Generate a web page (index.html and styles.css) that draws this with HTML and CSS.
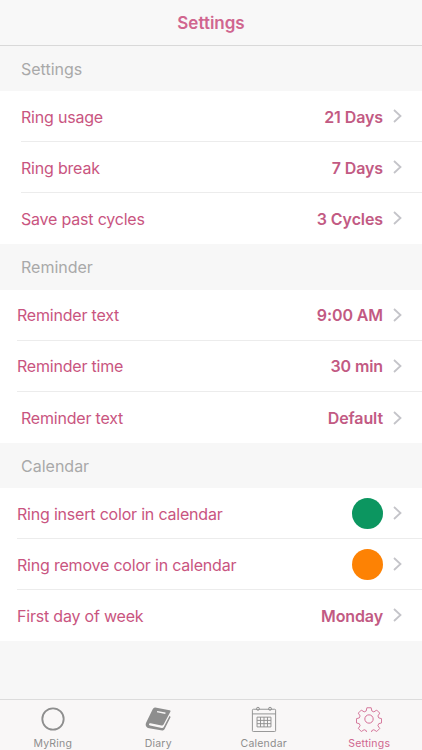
FILE: index.html
```html
<!DOCTYPE html>
<html>
<head>
    <meta charset="utf-8" />
    <meta name="viewport" content="width=device-width, initial-scale=1.0">
    <title>Settings</title>
    <link rel="stylesheet" href="styles.css">
</head>
<body>
    <div class="app">
        <header class="nav-bar">Settings</header>
        <main class="content">
            <div class="section-title">Settings</div>
            <div class="group">
                <div class="row"><span class="row-label">Ring usage</span><span class="row-value">21 Days</span><svg class="chevron" viewBox="0 0 9 14"><path d="M1 1l6.500 6-6.500 6"/></svg></div>
                <div class="row"><span class="row-label">Ring break</span><span class="row-value">7 Days</span><svg class="chevron" viewBox="0 0 9 14"><path d="M1 1l6.500 6-6.500 6"/></svg></div>
                <div class="row"><span class="row-label">Save past cycles</span><span class="row-value">3 Cycles</span><svg class="chevron" viewBox="0 0 9 14"><path d="M1 1l6.500 6-6.500 6"/></svg></div>
            </div>
            <div class="section-title section-tall">Reminder</div>
            <div class="group group-high">
                <div class="row row-tight"><span class="row-label">Reminder text</span><span class="row-value">9:00 AM</span><svg class="chevron" viewBox="0 0 9 14"><path d="M1 1l6.500 6-6.500 6"/></svg></div>
                <div class="row row-tight"><span class="row-label">Reminder time</span><span class="row-value">30 min</span><svg class="chevron" viewBox="0 0 9 14"><path d="M1 1l6.500 6-6.500 6"/></svg></div>
                <div class="row"><span class="row-label">Reminder text</span><span class="row-value">Default</span><svg class="chevron" viewBox="0 0 9 14"><path d="M1 1l6.500 6-6.500 6"/></svg></div>
            </div>
            <div class="section-title">Calendar</div>
            <div class="group">
                <div class="row row-tight"><span class="row-label">Ring insert color in calendar</span><span class="dot dot-green"></span><svg class="chevron" viewBox="0 0 9 14"><path d="M1 1l6.500 6-6.500 6"/></svg></div>
                <div class="row row-tight"><span class="row-label">Ring remove color in calendar</span><span class="dot dot-orange"></span><svg class="chevron" viewBox="0 0 9 14"><path d="M1 1l6.500 6-6.500 6"/></svg></div>
                <div class="row row-tight"><span class="row-label">First day of week</span><span class="row-value">Monday</span><svg class="chevron" viewBox="0 0 9 14"><path d="M1 1l6.500 6-6.500 6"/></svg></div>
            </div>
        </main>
        <nav class="tab-bar">
            <div class="tab">
                <svg class="tab-icon" viewBox="0 0 28 28"><circle class="line" cx="14" cy="14" r="11.500"/></svg>
                <span>MyRing</span>
            </div>
            <div class="tab">
                <svg class="tab-icon" viewBox="0 0 28 28">
                    <path class="fill" d="M11 1.500l15.500 3c1 .2 1.300.9.800 1.700L20 20c-.5.9-1.200 1.200-2.200 1L6 18.500c-2-.4-2.400 2-.6 2.400l12.600 2.700c1 .2 1.700-.1 2.200-1l6.300-12 1.100 1.200-6.600 13.300c-.5 1-1.300 1.400-2.400 1.200L4.500 24C1 23.200 0 20.300 1.300 17.700L8 4c.6-1.200 1.700-2.700 3-2.500z"/>
                    <path class="cut" d="M13 6l9 1.800"/>
                </svg>
                <span>Diary</span>
            </div>
            <div class="tab">
                <svg class="tab-icon" viewBox="0 0 28 28">
                    <rect class="line thin" x="1.500" y="3.500" width="25" height="24" rx="1"/>
                    <path class="line thin" d="M1.500 8.500h25"/>
                    <circle class="line thin" cx="7.500" cy="3" r="1.600"/>
                    <circle class="line thin" cx="20.500" cy="3" r="1.600"/>
                    <path class="line thin" d="M6.500 12h15v10.500h-15zM6.500 15.500h15M6.500 19h15M10.250 12v10.500M14 12v10.500M17.750 12v10.500"/>
                </svg>
                <span>Calendar</span>
            </div>
            <div class="tab tab-active">
                <svg class="tab-icon" viewBox="0 0 28 28">
                    <path class="line thin" d="M11.500 1.500h5l.8 3.800 2.300 1 3.300-2.100 3.500 3.500-2.100 3.300 1 2.300 3.200.8v5l-3.200.8-1 2.300 2.100 3.300-3.500 3.500-3.300-2.100-2.300 1-.8 3.200h-5l-.8-3.200-2.300-1-3.300 2.100-3.500-3.500 2.100-3.300-1-2.300-3.200-.8v-5l3.200-.8 1-2.300-2.100-3.300 3.500-3.500 3.300 2.100 2.300-1z" transform="translate(1 .5) scale(.93)"/>
                    <circle class="line thin" cx="14" cy="14" r="4.500"/>
                </svg>
                <span>Settings</span>
            </div>
        </nav>
    </div>
</body>
</html>
```

FILE: styles.css
```css
html, body {
    margin: 0;
    padding: 0;
}
body {
    font-family: Inter, "Liberation Sans", sans-serif;
    background: #f7f7f7;
}
.app {
    width: 422px;
    height: 750px;
    display: flex;
    flex-direction: column;
    overflow: hidden;
}
.nav-bar {
    height: 45px;
    flex: none;
    display: flex;
    align-items: center;
    justify-content: center;
    background: #f8f8f8;
    border-bottom: 1px solid #d9d9d9;
    color: #d0668f;
    font-size: 17px;
    font-weight: 600;
}
.content {
    flex: 1;
}
.section-title {
    height: 45px;
    padding-left: 21px;
    display: flex;
    align-items: center;
    color: #a9a9a9;
    font-size: 16px;
}
.section-tall {
    height: 46px;
}
.group {
    background: #fff;
}
.row {
    height: 51px;
    box-sizing: border-box;
    margin-left: 21px;
    padding-top: 1px;
    padding-right: 20px;
    display: flex;
    align-items: center;
    border-bottom: 1px solid #ececec;
    color: #c9557f;
    font-size: 16px;
    letter-spacing: -0.2px;
}
.row-tight {
    margin-left: 17px;
}
.group-high .row {
    padding-top: 0;
}
.group-high .chevron {
    margin-top: 0;
}
.group .row:last-child {
    border-bottom: none;
}
.row-label {
    flex: 1;
}
.row-value {
    font-weight: 600;
    color: #c25a83;
    letter-spacing: -0.1px;
}
.chevron {
    width: 9px;
    height: 14px;
    margin-left: 10px;
    margin-top: -2px;
    fill: none;
    stroke: #c4c4c9;
    stroke-width: 1.800;
}
.dot {
    width: 31px;
    height: 31px;
    margin-top: -1px;
    border-radius: 50%;
}
.dot-green {
    background: #0c9660;
}
.dot-orange {
    background: #fd8204;
}
.tab-bar {
    height: 50px;
    flex: none;
    display: flex;
    background: #f9f7f7;
    border-top: 1px solid #dcdcdc;
}
.tab {
    flex: 1;
    display: flex;
    flex-direction: column;
    align-items: center;
    padding-top: 6px;
    color: #8e8e8e;
    font-size: 10.500px;
    letter-spacing: 0.2px;
}
.tab-icon {
    width: 26px;
    height: 26px;
    margin-bottom: 5px;
}
.tab-icon .line {
    fill: none;
    stroke: #8e8e8e;
    stroke-width: 2;
}
.tab-icon .thin {
    stroke-width: 1;
}
.tab-icon .fill {
    fill: #8e8e8e;
}
.tab-icon .cut {
    fill: none;
    stroke: #f9f7f7;
    stroke-width: 1.500;
}
.tab-active {
    color: #d0668f;
}
.tab-active .tab-icon .line {
    stroke: #d0668f;
}
```
